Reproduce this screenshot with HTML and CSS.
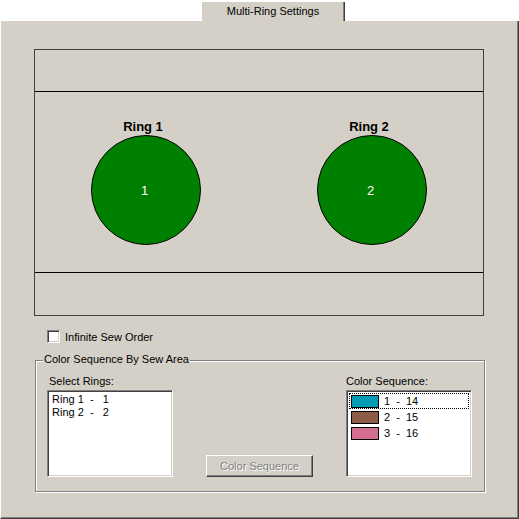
FILE: index.html
```html
<!DOCTYPE html>
<html>
<head>
<meta charset="utf-8">
<link rel="stylesheet" href="styles.css">
</head>
<body>
<div class="tabs"><div class="tab">Multi-Ring Settings</div></div>
<div class="panel">
  <div class="canvas">
    <div class="band-top"></div>
    <div class="band-mid">
      <div class="ring"><div class="ring-label">Ring 1</div><div class="circle">1</div></div>
      <div class="ring"><div class="ring-label">Ring 2</div><div class="circle">2</div></div>
    </div>
    <div class="band-bottom"></div>
  </div>
  <div class="check-row"><span class="checkbox"></span><span>Infinite Sew Order</span></div>
  <div class="group">
    <span class="legend">Color Sequence By Sew Area</span>
    <div class="group-grid">
      <div class="label label-left">Select Rings:</div>
      <div class="label label-right">Color Sequence:</div>
      <div class="listbox list-left">
        <div class="ring-item">Ring 1  -   1</div>
        <div class="ring-item">Ring 2  -   2</div>
      </div>
      <div class="button">Color Sequence</div>
      <div class="listbox list-right">
        <div class="color-item focused"><span class="swatch sw-cyan"></span><span class="ci-text">1  -  14</span></div>
        <div class="color-item"><span class="swatch sw-brown"></span><span class="ci-text">2  -  15</span></div>
        <div class="color-item"><span class="swatch sw-pink"></span><span class="ci-text">3  -  16</span></div>
      </div>
    </div>
  </div>
</div>
</body>
</html>
```
FILE: styles.css
```css
html, body {
  margin: 0;
  padding: 0;
  background: #fff;
}
body {
  width: 519px;
  height: 519px;
  overflow: hidden;
  font-family: "Liberation Sans", Arial, sans-serif;
  font-size: 11px;
  color: #000;
}
.tabs {
  height: 21px;
  display: flex;
  align-items: flex-end;
  padding-left: 202px;
}
.tab {
  width: 143px;
  height: 19px;
  box-sizing: border-box;
  background: #d4d0c8;
  border-right: 1px solid #404040;
  box-shadow: inset -1px 0 0 #808080;
  text-align: center;
  line-height: 19px;
}
.panel {
  width: 519px;
  height: 498px;
  box-sizing: border-box;
  background: #d4d0c8;
  border-left: 1px solid #fff;
  border-right: 1px solid #404040;
  border-bottom: 1px solid #404040;
  box-shadow: inset -1px -1px 0 #808080;
  padding: 28px 0 0 33px;
}
.canvas {
  width: 450px;
  height: 267px;
  box-sizing: border-box;
  border: 1px solid #404040;
  display: flex;
  flex-direction: column;
}
.band-top {
  height: 42px;
  box-sizing: border-box;
  border-bottom: 1px solid #000;
}
.band-mid {
  height: 181px;
  box-sizing: border-box;
  border-bottom: 1px solid #000;
  display: flex;
  padding: 27px 0 0 56px;
  gap: 116px;
}
.band-bottom {
  flex: 1;
}
.ring {
  width: 110px;
  display: flex;
  flex-direction: column;
  align-items: center;
}
.ring-label {
  font-weight: bold;
  font-size: 13px;
  line-height: 16px;
  padding-right: 6px;
}
.circle {
  width: 110px;
  height: 110px;
  box-sizing: border-box;
  border-radius: 50%;
  background: #008000;
  border: 1px solid #000;
  display: flex;
  align-items: center;
  justify-content: center;
  color: #fff;
  font-size: 13px;
  padding-right: 3px;
}
.check-row {
  margin: 14px 0 0 13px;
  height: 13px;
  display: flex;
  align-items: center;
  gap: 5px;
}
.checkbox {
  width: 13px;
  height: 13px;
  box-sizing: border-box;
  background: #fff;
  border: 1px solid;
  border-color: #808080 #fff #fff #808080;
  box-shadow: inset 1px 1px 0 #404040, inset -1px -1px 0 #d4d0c8;
}
.group {
  position: relative;
  margin: 17px 0 0 1px;
  width: 450px;
  height: 132px;
  box-sizing: border-box;
  border: 1px solid #808080;
  box-shadow: 1px 1px 0 #fff, inset 1px 1px 0 #fff;
  padding: 14px 0 0 11px;
}
.legend {
  position: absolute;
  top: -8px;
  left: 7px;
  padding: 0 1px;
  line-height: 13px;
  background: #d4d0c8;
}
.group-grid {
  display: grid;
  grid-template-columns: 126px 107px 126px;
  grid-template-rows: 13px 87px;
  column-gap: 33px;
  row-gap: 2px;
}
.label {
  line-height: 13px;
}
.label-left {
  grid-column: 1;
  grid-row: 1;
  padding-left: 2px;
}
.label-right {
  grid-column: 3;
  grid-row: 1;
}
.listbox {
  grid-row: 2;
  box-sizing: border-box;
  background: #fff;
  border: 1px solid;
  border-color: #808080 #fff #fff #808080;
  box-shadow: inset 1px 1px 0 #404040, inset -1px -1px 0 #d4d0c8;
  padding: 2px;
}
.list-left {
  grid-column: 1;
  padding-left: 4px;
}
.list-right {
  grid-column: 3;
}
.ring-item {
  white-space: pre;
  line-height: 13px;
}
.color-item {
  height: 16px;
  display: flex;
  align-items: center;
  white-space: pre;
}
.color-item.focused {
  outline: 1px dotted #000;
  outline-offset: -1px;
}
.swatch {
  width: 28px;
  height: 13px;
  box-sizing: border-box;
  border: 1px solid #000;
  margin-left: 2px;
}
.sw-cyan { background: #009cb4; }
.sw-brown { background: #8e5c46; }
.sw-pink { background: #d26d8f; }
.ci-text {
  margin-left: 5px;
}
.button {
  grid-column: 2;
  grid-row: 2;
  align-self: end;
  height: 22px;
  box-sizing: border-box;
  border: 1px solid;
  border-color: #fff #404040 #404040 #fff;
  box-shadow: inset -1px -1px 0 #808080;
  color: #808080;
  text-shadow: 1px 1px 0 #fff;
  text-align: center;
  line-height: 20px;
}
```
